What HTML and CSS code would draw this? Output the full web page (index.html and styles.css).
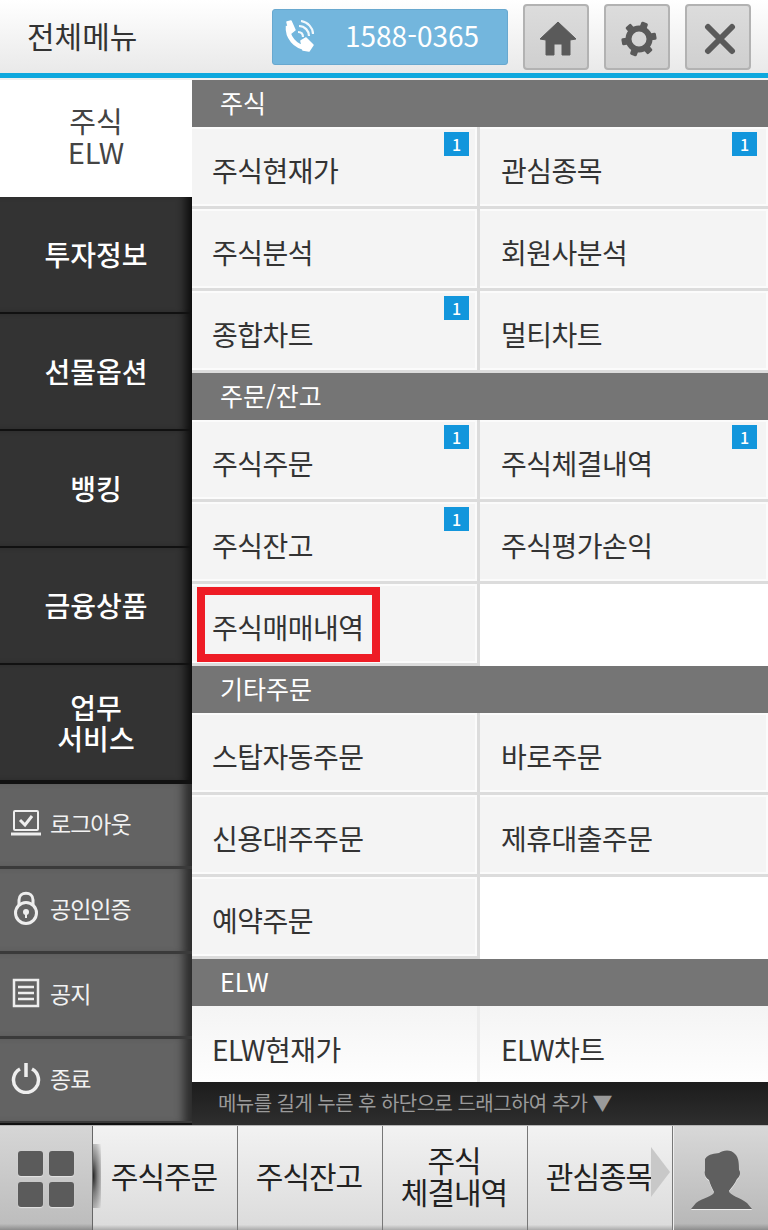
FILE: index.html
```html
<!DOCTYPE html>
<html lang="ko">
<head>
<meta charset="UTF-8">
<meta name="viewport" content="width=device-width, initial-scale=1.0">
<title>전체메뉴</title>
<link rel="stylesheet" href="styles.css">
</head>
<body>
<div class="app">
    <header class="top">
        <div class="top-title">전체메뉴</div>
        <div class="phone">
            <svg class="phone-icon" viewBox="0 0 32 33" width="32" height="33"><path d="M6 6 C5 17 13 27 25 28" fill="none" stroke="#fff" stroke-width="4.5"/><path d="M5 2 L9 1 L13 10 L8 14 Z M19 21 L24 18 L31 25 L27 31 L21 30 Z" fill="#fff" stroke="#fff" stroke-width="1.5" stroke-linejoin="round"/><path d="M16 12 C19 12 21 14 21 17 M17 6 C23 6 27 11 27 16 M19 1 C26 2 31 8 31 14" fill="none" stroke="#fff" stroke-width="2.2" opacity="0.9"/></svg>
            <span class="phone-num">1588-0365</span>
        </div>
        <div class="top-btn">
            <svg viewBox="0 0 38 35" width="38" height="35"><path d="M19 1 L37 18 L31 19 L31 34 L23 34 L23 23 L15 23 L15 34 L7 34 L7 19 L1 18 Z" fill="#5a5a5a" stroke="#5a5a5a" stroke-width="1" stroke-linejoin="round"/></svg>
        </div>
        <div class="top-btn">
            <svg viewBox="-19 -19 38 38" width="38" height="38">
                <circle r="10.5" fill="none" stroke="#5a5a5a" stroke-width="6"/>
                <g fill="#5a5a5a">
                    <rect x="-3.5" y="-17.5" width="7" height="7" rx="1.5" transform="rotate(20)"/>
                    <rect x="-3.5" y="-17.5" width="7" height="7" rx="1.5" transform="rotate(80)"/>
                    <rect x="-3.5" y="-17.5" width="7" height="7" rx="1.5" transform="rotate(140)"/>
                    <rect x="-3.5" y="-17.5" width="7" height="7" rx="1.5" transform="rotate(200)"/>
                    <rect x="-3.5" y="-17.5" width="7" height="7" rx="1.5" transform="rotate(260)"/>
                    <rect x="-3.5" y="-17.5" width="7" height="7" rx="1.5" transform="rotate(320)"/>
                </g>
            </svg>
        </div>
        <div class="top-btn">
            <svg viewBox="0 0 32 32" width="32" height="32"><path d="M4 4 L28 28 M28 4 L4 28" stroke="#5a5a5a" stroke-width="6" stroke-linecap="round" fill="none"/></svg>
        </div>
    </header>
    <div class="blue-line"></div>

    <div class="middle">
        <nav class="side">
            <div class="side-item active">주식<br>ELW</div>
            <div class="side-item">투자정보</div>
            <div class="side-item">선물옵션</div>
            <div class="side-item">뱅킹</div>
            <div class="side-item">금융상품</div>
            <div class="side-item">업무<br>서비스</div>
            <div class="side-tools">
                <div class="tool">
                    <svg viewBox="0 0 32 28" width="32" height="28"><rect x="4" y="2" width="24" height="19" rx="1" fill="none" stroke="#eee" stroke-width="2"/><path d="M10 11 L15 16 L22 7" fill="none" stroke="#eee" stroke-width="3"/><path d="M1 25 H31" stroke="#eee" stroke-width="3"/></svg>
                    <span>로그아웃</span>
                </div>
                <div class="tool">
                    <svg viewBox="0 0 32 36" width="32" height="36"><path d="M9 16 V10 C9 1 23 1 23 10 V16" fill="none" stroke="#eee" stroke-width="3"/><circle cx="16" cy="23" r="10.5" fill="none" stroke="#eee" stroke-width="3"/><circle cx="16" cy="22" r="3" fill="#eee"/><path d="M16 23 V28" stroke="#eee" stroke-width="2"/></svg>
                    <span>공인인증</span>
                </div>
                <div class="tool">
                    <svg viewBox="0 0 32 30" width="32" height="30"><rect x="4" y="2" width="24" height="26" fill="none" stroke="#eee" stroke-width="2.5"/><path d="M8 9 H24 M8 15 H24 M8 21 H24" stroke="#eee" stroke-width="2.5"/></svg>
                    <span>공지</span>
                </div>
                <div class="tool">
                    <svg viewBox="0 0 32 32" width="32" height="32"><path d="M10 7 A12.5 12.5 0 1 0 22 7" fill="none" stroke="#eee" stroke-width="3.5"/><path d="M16 1 V15" stroke="#eee" stroke-width="3.5"/></svg>
                    <span>종료</span>
                </div>
            </div>
        </nav>

        <main class="menu">
            <div class="list">
                <h2 class="sec">주식</h2>
                <div class="cells">
                    <div class="cell">주식현재가<b class="badge">1</b></div>
                    <div class="cell">관심종목<b class="badge">1</b></div>
                    <div class="cell">주식분석</div>
                    <div class="cell">회원사분석</div>
                    <div class="cell">종합차트<b class="badge">1</b></div>
                    <div class="cell">멀티차트</div>
                </div>
                <h2 class="sec">주문/잔고</h2>
                <div class="cells">
                    <div class="cell">주식주문<b class="badge">1</b></div>
                    <div class="cell">주식체결내역<b class="badge">1</b></div>
                    <div class="cell">주식잔고<b class="badge">1</b></div>
                    <div class="cell">주식평가손익</div>
                    <div class="cell">주식매매내역<i class="mark"></i></div>
                    <div class="cell empty"></div>
                </div>
                <h2 class="sec">기타주문</h2>
                <div class="cells">
                    <div class="cell">스탑자동주문</div>
                    <div class="cell">바로주문</div>
                    <div class="cell">신용대주주문</div>
                    <div class="cell">제휴대출주문</div>
                    <div class="cell">예약주문</div>
                    <div class="cell empty"></div>
                </div>
                <h2 class="sec">ELW</h2>
                <div class="cells">
                    <div class="cell fade">ELW현재가</div>
                    <div class="cell fade">ELW차트</div>
                </div>
            </div>
            <div class="hint">메뉴를 길게 누른 후 하단으로 드래그하여 추가 ▼</div>
        </main>
    </div>

    <footer class="bottom">
        <div class="grid-btn">
            <div class="squares"><i></i><i></i><i></i><i></i></div>
        </div>
        <div class="tab first">주식주문</div>
        <div class="tab">주식잔고</div>
        <div class="tab">주식<br>체결내역</div>
        <div class="tab">관심종목<i class="arrow"></i></div>
        <div class="user-btn">
            <svg class="user-icon" viewBox="0 0 61 59" width="61" height="59"><path d="M14 9 C18 3 24 4 28 3 C32 0 40 -1 44 4 C48 8 48 14 48 20 C50 22 49 27 46 29 C44 34 40 38 38 41 C38 45 50 48 56 53 L61 59 H0 L5 53 C11 48 23 46 23 42 C21 38 19 34 18 30 C14 28 13 23 14 21 Z" fill="#5f5f5f"/></svg>
        </div>
    </footer>
</div>
</body>
</html>
```

FILE: styles.css
```css
body, html {
    height: 100%;
    margin: 0;
    padding: 0;
}

body {
    font-family: "Noto Sans CJK KR", "Noto Sans", sans-serif;
    background: #fff;
}

.app {
    display: flex;
    flex-direction: column;
    width: 768px;
    height: 1230px;
    overflow: hidden;
}

/* TOP BAR */
.top {
    display: flex;
    align-items: center;
    height: 73px;
    box-sizing: border-box;
    padding: 0 17px 0 27px;
    background: linear-gradient(#ffffff, #e9e9e9);
}

.top-title {
    flex: 1;
    padding-bottom: 4px;
    font-size: 30px;
    color: #333;
}

.phone {
    display: flex;
    align-items: center;
    width: 236px;
    height: 56px;
    box-sizing: border-box;
    padding-left: 9px;
    margin-right: 15px;
    background: #73b6dd;
    border: 1px solid #68a8cf;
    border-radius: 3px;
}

.phone-num {
    margin: 0 0 4px 31px;
    font-size: 28px;
    color: #fff;
}

.top-btn {
    display: flex;
    align-items: center;
    justify-content: center;
    width: 66px;
    height: 66px;
    box-sizing: border-box;
    padding: 4px 0 0 4px;
    margin-left: 15px;
    background: linear-gradient(#dcdcdc, #cfcfcf);
    border: 2px solid #b2b2b2;
    border-radius: 4px;
}

.phone + .top-btn {
    margin-left: 0;
}

.blue-line {
    height: 5px;
    background: #0ea8de;
    border-bottom: 2px solid #f0f0f0;
}

/* MIDDLE */
.middle {
    display: flex;
    height: 1045px;
}

.side {
    display: flex;
    flex-direction: column;
    flex: none;
    width: 192px;
    background: #111;
}

.side-item {
    display: flex;
    align-items: center;
    justify-content: center;
    height: 115px;
    margin-bottom: 2px;
    text-align: center;
    font-size: 28px;
    line-height: 31px;
    font-weight: 500;
    color: #fff;
    background: #333;
    box-shadow: inset -12px 0 10px -6px #0c0c0c;
}

.side-item.active {
    height: 117px;
    box-sizing: border-box;
    padding-bottom: 5px;
    margin-bottom: 0;
    font-size: 29px;
    font-weight: 400;
    color: #444;
    background: #fff;
    box-shadow: none;
}

.side-tools {
    display: flex;
    flex-direction: column;
    gap: 3px;
    background: #3a3a3a;
    border-top: 2px solid #111;
    border-bottom: 2px solid #3a3a3a;
}

.tool {
    display: flex;
    align-items: center;
    gap: 8px;
    height: 82px;
    box-sizing: border-box;
    padding: 0 0 5px 10px;
    font-size: 23px;
    letter-spacing: -1px;
    color: #f2f2f2;
    background: #636363;
    box-shadow: inset -14px 0 10px -6px #2c2c2c;
}

.tool svg {
    flex: none;
}

/* MENU LIST */
.menu {
    display: flex;
    flex-direction: column;
    flex: 1;
    min-width: 0;
}

.list {
    flex: 1;
    overflow: hidden;
    background: #fff;
}

.sec {
    height: 47px;
    margin: 0;
    padding-left: 28px;
    font-size: 25px;
    font-weight: 400;
    line-height: 45px;
    color: #fff;
    background: #757575;
}

.cells {
    display: grid;
    grid-template-columns: 288px 288px;
}

.cell {
    position: relative;
    height: 82px;
    box-sizing: border-box;
    padding-left: 20px;
    font-size: 28px;
    line-height: 86px;
    letter-spacing: -0.5px;
    color: #333;
    background: #f4f4f4;
    border-right: 3px solid #dcdcdc;
    border-bottom: 3px solid #dcdcdc;
    box-shadow: inset -2px -2px 0 #fbfbfb, inset 0 2px 0 #fbfbfb;
}

.cell:nth-child(even) {
    border-right: none;
    padding-left: 21px;
}

.cell.empty {
    background: #fff;
    border-bottom: none;
    box-shadow: none;
}

.cell.fade {
    background: linear-gradient(#f4f4f4, #fff);
    border-bottom: none;
    border-right-color: #ececec;
    box-shadow: none;
}

.badge {
    position: absolute;
    top: 5px;
    right: 8px;
    width: 25px;
    height: 24px;
    text-align: center;
    font-size: 16px;
    font-weight: 500;
    line-height: 24px;
    letter-spacing: 0;
    color: #fff;
    background: #1296dc;
}

.cell:nth-child(even) .badge {
    right: 11px;
}

.mark {
    position: absolute;
    top: 3px;
    left: 5px;
    width: 183px;
    height: 75px;
    box-sizing: border-box;
    border: 8px solid #ee1c25;
}

.hint {
    height: 43px;
    padding-left: 26px;
    font-size: 20px;
    line-height: 41px;
    letter-spacing: -0.55px;
    color: #9a9a9a;
    background: linear-gradient(#1c1c1c, #2e2e2e);
}

/* BOTTOM BAR */
.bottom {
    display: flex;
    height: 105px;
    box-sizing: border-box;
    background: #8a8a8a;
    border-top: 1px solid #b5b5b5;
}

.grid-btn {
    display: flex;
    align-items: center;
    justify-content: center;
    flex: none;
    width: 93px;
    box-sizing: border-box;
    background: linear-gradient(#d6d6d6, #bdbdbd 94%, #8c8c8c);
    border-right: 1px solid #666;
}

.squares {
    display: grid;
    grid-template-columns: 25px 25px;
    grid-auto-rows: 25px;
    gap: 6px;
    padding-top: 2px;
}

.squares i {
    background: #5b5b5b;
    border-radius: 3px;
    box-shadow: 0 1px 1px #e4e4e4;
}

.tab {
    position: relative;
    display: flex;
    align-items: center;
    justify-content: center;
    flex: none;
    width: 145px;
    box-sizing: border-box;
    padding: 0 2px 7px 0;
    text-align: center;
    font-size: 30px;
    line-height: 32px;
    letter-spacing: -1px;
    color: #222;
    background: linear-gradient(#f2f2f2, #dcdcdc 95%, #aaa);
    border-right: 1px solid #777;
}

/* curved shadow at the left end of the tab strip */
.tab.first::before {
    content: "";
    position: absolute;
    top: 18px;
    left: 0;
    width: 8px;
    height: 64px;
    background: radial-gradient(ellipse at left center, #222 0%, rgba(60, 60, 60, 0.6) 40%, rgba(120, 120, 120, 0) 100%);
}

.arrow {
    position: absolute;
    top: 21px;
    right: 2px;
    border-left: 19px solid #c8c8c8;
    border-top: 25px solid transparent;
    border-bottom: 25px solid transparent;
}

.user-btn {
    display: flex;
    align-items: flex-end;
    justify-content: center;
    flex: 1;
    padding: 0 0 21px 1px;
    background: linear-gradient(#d8d8d8, #b8b8b8 94%, #8c8c8c);
    border-left: 1px solid #efefef;
}

.user-icon {
    filter: drop-shadow(0 1px 0 #eee);
}
```
